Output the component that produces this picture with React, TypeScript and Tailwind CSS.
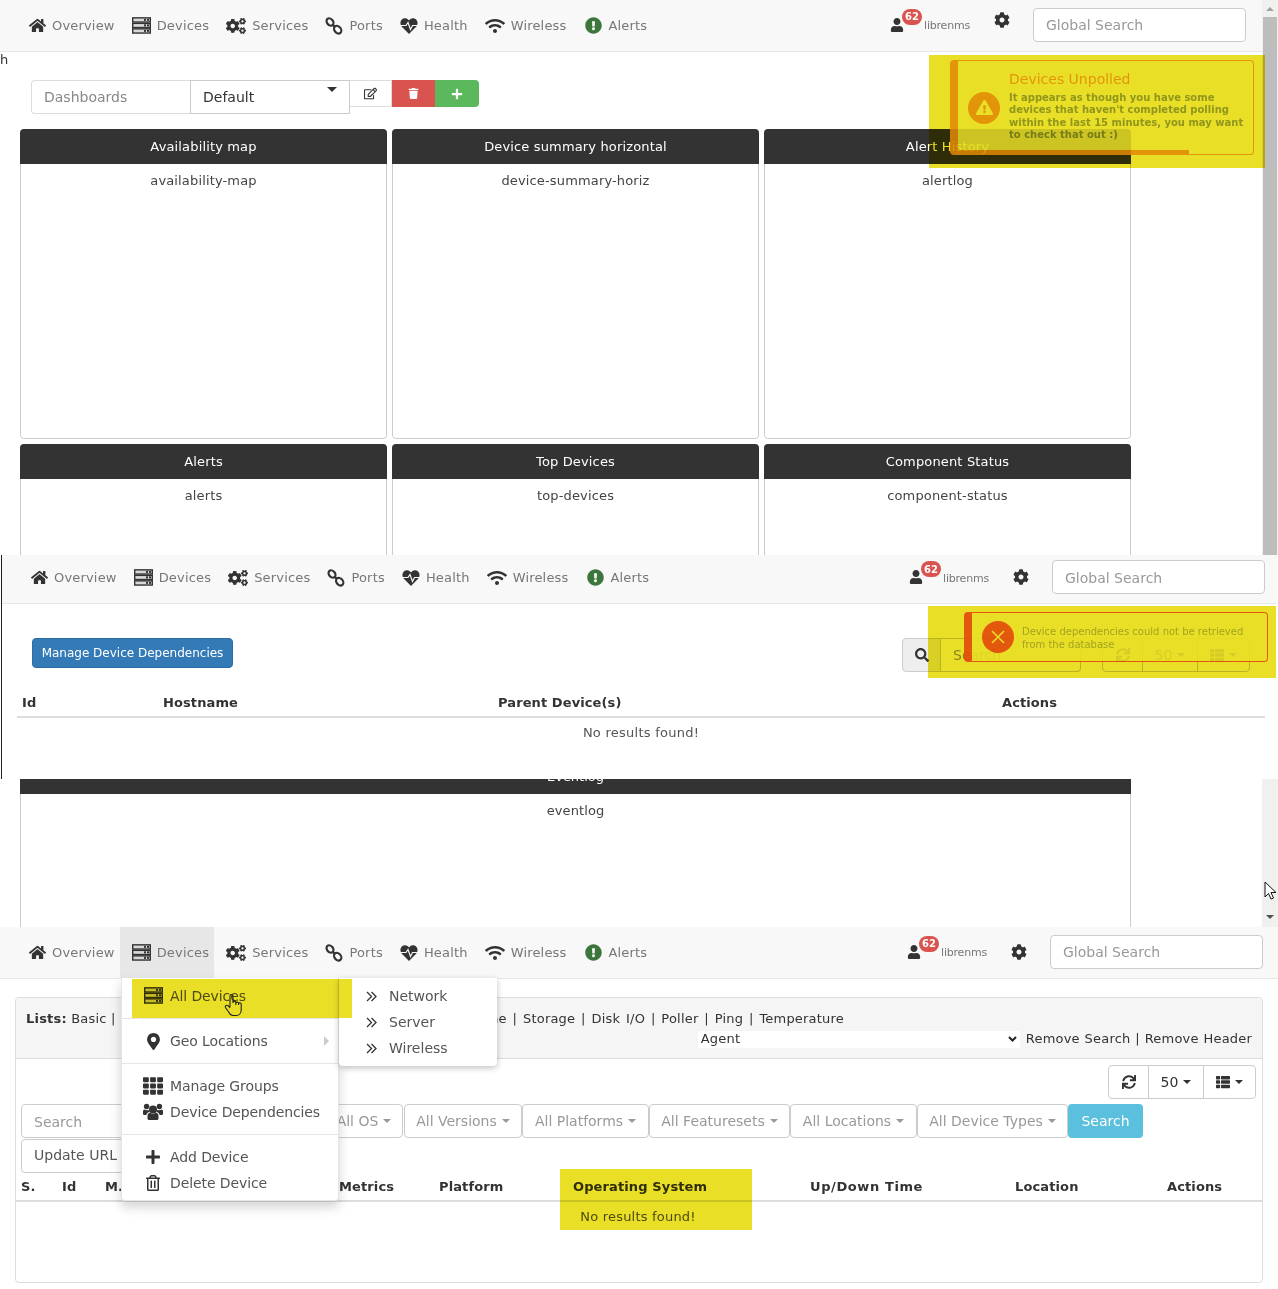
import React from "react";
import {
  FaHome, FaCogs, FaWifi, FaExclamationCircle, FaUser, FaCog,
  FaRegEdit, FaTrash, FaPlus, FaSearch, FaSync, FaThList, FaMapMarkerAlt,
  FaTh, FaRegTrashAlt, FaExclamationTriangle,
} from "react-icons/fa";

function ServerIcon({ size = 19 }: { size?: number }) {
  return (
    <svg width={size} height={size * 0.9} viewBox="0 0 19 17">
      {[0.8, 6.3, 11.8].map((y) => (
        <g key={y}>
          <rect x="0.7" y={y} width="17.6" height="4.2" fill="#d8d8d8" stroke="#333" strokeWidth="1.4" />
          <rect x="12" y={y + 1} width="2" height="2" fill="#333" />
          <rect x="15" y={y + 1} width="2" height="2" fill="#333" />
        </g>
      ))}
    </svg>
  );
}

function LinkIcon({ size = 18 }: { size?: number }) {
  return (
    <svg width={size} height={size} viewBox="0 0 18 18" fill="none" stroke="#333" strokeWidth="2.2">
      <ellipse cx="5" cy="5" rx="4" ry="3" transform="rotate(50 5 5)" />
      <ellipse cx="12.7" cy="12.7" rx="4.2" ry="3.2" transform="rotate(50 12.7 12.7)" />
      <path d="M7.5 7.5l2.6 2.6" />
    </svg>
  );
}

function HeartIcon({ size = 18 }: { size?: number }) {
  return (
    <svg width={size} height={size} viewBox="0 0 18 18">
      <path d="M9 17L1.6 9.5C-1 6 1 1.2 5 1.2c2 0 3.3 1.1 4 2.2.7-1.1 2-2.2 4-2.2 4 0 6 4.8 3.4 8.3z" fill="#333" />
      <path d="M0 8.5h6l2-3 2.5 7 2-4H18" fill="none" stroke="#f8f8f8" strokeWidth="1.2" />
    </svg>
  );
}

function UsersIcon({ size = 20 }: { size?: number }) {
  return (
    <svg width={size} height={size} viewBox="0 0 20 20" fill="#333">
      <circle cx="10" cy="7.5" r="4" />
      <circle cx="3.6" cy="4.5" r="2.7" />
      <circle cx="16.4" cy="4.5" r="2.7" />
      <path d="M4.5 14c0-2 1-3 2.6-3.2 1.6 1.4 4.2 1.4 5.8 0 1.6.2 2.6 1.2 2.6 3.2v2.5c0 1-1 1.5-2 1.5H6.500c-1 0-2-.5-2-1.500z" />
      <path d="M0 9.500C0 8.200.6 7.700 1.600 7.500c1.200 1 3 1 4 .2.100 1 .6 1.700 1.200 2.300C4.600 10.300 3.600 11.400 3.400 13H1.500C.6 13 0 12.500 0 11.500zM20 9.500c0-1.300-.6-1.800-1.600-2-1.200 1-3 1-4 .2-.1 1-.6 1.700-1.200 2.300 2.200.3 3.200 1.400 3.400 3h1.900c.9 0 1.500-.5 1.500-1.500z" />
    </svg>
  );
}

function DoubleAngle() {
  return (
    <svg width="11" height="11" viewBox="0 0 11 11" fill="none" stroke="#333" strokeWidth="1.3">
      <path d="M1 1l4.5 4.5L1 10M5.500 1L10 5.500 5.500 10" />
    </svg>
  );
}

const navItems = [
  { label: "Overview", Icon: FaHome, w: "w-[18px]", size: 17, color: "text-[#333]" },
  { label: "Devices", Icon: ServerIcon, w: "w-[19px]", size: 19, color: "text-[#333]" },
  { label: "Services", Icon: FaCogs, w: "w-[20px]", size: 20, color: "text-[#333]" },
  { label: "Ports", Icon: LinkIcon, w: "w-[18px]", size: 18, color: "text-[#333]" },
  { label: "Health", Icon: HeartIcon, w: "w-[18px]", size: 18, color: "text-[#333]" },
  { label: "Wireless", Icon: FaWifi, w: "w-[20px]", size: 20, color: "text-[#333]" },
  { label: "Alerts", Icon: FaExclamationCircle, w: "w-[19px]", size: 17, color: "text-[#3c763d]" },
];

function Nav({ h, inner, pr, pb, active, gearUp }: { h: string; inner: string; pr: string; pb: string; active?: string; gearUp?: boolean }) {
  return (
    <div className={`${h} ${pr} ${pb} shrink-0 flex items-center pl-[16px] bg-[#f8f8f8] border-b border-[#e7e7e7]`}>
      <div className={`flex items-center ${inner} self-start`}>
        {navItems.map(({ label, Icon, w, size, color }) => (
          <div key={label} className={`flex items-center h-full pl-[12px] pr-[5px] gap-[6px] text-[13px] tracking-[0.18px] text-[#777] ${active === label ? "bg-[#e7e7e7]" : ""}`}>
            <span className={`${w} flex justify-center ${color}`}><Icon size={size} /></span>
            <span>{label}</span>
          </div>
        ))}
      </div>
      <div className="ml-auto flex items-center">
        <div className="relative w-[14px] text-[#333]">
          <FaUser size={14} />
          <span className="absolute left-[12px] top-[-9px] w-[20px] h-[16px] rounded-full bg-[#d9534f] text-white text-[10px] font-bold flex items-center justify-center">62</span>
        </div>
        <span className="ml-[20px] text-[11px] tracking-[-0.2px] text-[#777] mt-[4px]">librenms</span>
        <span className={`ml-[24px] text-[#333] ${gearUp ? "mb-[9px]" : ""}`}><FaCog size={16} /></span>
        <div className="ml-[23px] w-[213px] h-[34px] bg-white border border-[#ccc] rounded flex items-center pl-[12px] pt-[2px] text-[14px] text-[#999]">Global Search</div>
      </div>
    </div>
  );
}

function Widget({ title, body }: { title: string; body: string }) {
  return (
    <div className="flex flex-col h-[310px] rounded overflow-hidden">
      <div className="h-[35px] shrink-0 bg-[#333] text-white text-[13px] tracking-[0.15px] font-medium flex items-center justify-center">{title}</div>
      <div className="flex-1 bg-white border border-t-0 border-[#ccc] rounded-b pt-[8px] text-center text-[13px] tracking-[0.15px] leading-[18px] text-[#444]">{body}</div>
    </div>
  );
}

function Scroll({ thumb, up, down }: { thumb?: boolean; up?: boolean; down?: boolean }) {
  return (
    <div className="w-[16px] shrink-0 bg-[#f0f0f0] flex flex-col items-center">
      {up && (
        <div className="h-[17px] flex items-center justify-center shrink-0">
          <div className="w-0 h-0 border-x-[4px] border-b-[4px] border-x-transparent border-b-[#a3a3a3]" />
        </div>
      )}
      {thumb && <div className="w-[14px] flex-1 bg-[#bdbdbd]" />}
      {down && (
        <div className="mt-auto h-[20px] shrink-0 flex items-center justify-center">
          <div className="w-0 h-0 border-x-[4px] border-t-[4px] border-x-transparent border-t-[#505050]" />
        </div>
      )}
    </div>
  );
}

function Caret() {
  return <span className="inline-block ml-[5px] align-middle w-0 h-0 border-x-[4px] border-t-[4px] border-x-transparent border-t-current" />;
}

function Filter({ label, w }: { label: string; w: string }) {
  return (
    <div className={`${w} shrink-0 h-[34px] border border-[#ccc] rounded bg-white text-[14px] text-[#999] flex items-center justify-center whitespace-nowrap`}>
      {label}
      <Caret />
    </div>
  );
}

function MenuRow({ Icon, size, label, arrow }: { Icon: any; size: number; label: string; arrow?: boolean }) {
  return (
    <div className="relative h-[26px] flex items-center pl-[21px] text-[14px] tracking-[-0.1px] text-[#555]">
      <span className="w-[20px] mr-[7px] flex justify-center text-[#333]"><Icon size={size} /></span>
      {label}
      {arrow && <span className="absolute right-[9px] top-[8px] w-0 h-0 border-y-[5px] border-l-[5px] border-y-transparent border-l-[#ccc]" />}
    </div>
  );
}

function SubRow({ label }: { label: string }) {
  return (
    <div className="h-[26px] flex items-center pl-[27px] text-[14px] text-[#555]">
      <span className="w-[23px]"><DoubleAngle /></span>
      {label}
    </div>
  );
}

function Divider() {
  return <div className="my-[9px] h-px bg-[#e5e5e5]" />;
}

function BtnGroup() {
  return (
    <div className="flex h-[34px] w-[148px] border border-[#ccc] rounded bg-white text-[#333] text-[14px]">
      <div className="w-[39px] flex items-center justify-center"><FaSync size={14} /></div>
      <div className="w-[56px] flex items-center justify-center border-x border-[#ccc]">50<Caret /></div>
      <div className="flex-1 flex items-center justify-center"><FaThList size={14} /><Caret /></div>
    </div>
  );
}

export default function App() {
  return (
    <div className="relative w-[1278px] h-[1289px] overflow-hidden bg-white font-['DejaVu_Sans',sans-serif]">
      {/* Screen 1: dashboard */}
      <section className="h-[555px] flex overflow-hidden">
        <div className="w-[1262px] shrink-0 flex flex-col">
          <Nav h="h-[52px]" inner="h-[51px]" pr="pr-[16px]" pb="pb-[2px]" gearUp />
          <div className="h-[28px] shrink-0 text-[13px] leading-[16px] text-[#333]">h</div>
          <div className="h-[49px] shrink-0 ml-[31px] flex items-start text-[14px]">
            <div className="w-[159px] h-[34px] border border-[#ddd] border-r-0 rounded-l flex items-center pl-[12px] text-[#888]">Dashboards</div>
            <div className="relative w-[160px] h-[34px] border border-[#ccc] flex items-center pl-[12px] text-[#333]">
              Default
              <span className="absolute right-[12px] top-[6px] w-0 h-0 border-x-[5px] border-t-[5px] border-x-transparent border-t-[#333]" />
            </div>
            <div className="w-[42px] h-[27px] bg-white border border-l-0 border-[#ddd] flex items-center justify-center text-[#333]"><FaRegEdit size={13} /></div>
            <div className="w-[43px] h-[27px] bg-[#d9534f] flex items-center justify-center text-white"><FaTrash size={11} /></div>
            <div className="w-[44px] h-[27px] bg-[#5cb85c] rounded-r flex items-center justify-center text-white"><FaPlus size={12} /></div>
          </div>
          <div className="ml-[20px] w-[1111px] grid grid-cols-3 gap-[5px]">
            <Widget title="Availability map" body="availability-map" />
            <Widget title="Device summary horizontal" body="device-summary-horiz" />
            <Widget title="Alert History" body="alertlog" />
            <Widget title="Alerts" body="alerts" />
            <Widget title="Top Devices" body="top-devices" />
            <Widget title="Component Status" body="component-status" />
          </div>
        </div>
        <Scroll up thumb />
      </section>

      {/* Screen 2: device dependencies */}
      <section className="h-[224px] w-[1276px] flex flex-col bg-white border-l border-[#222] ml-px overflow-hidden">
        <Nav h="h-[49px]" inner="h-[45px]" pr="pr-[12px]" pb="pb-[4px]" gearUp={false} />
        <div className="mt-[34px] h-[34px] shrink-0 flex items-start pl-[30px] pr-[27px]">
          <div className="w-[201px] h-[30px] bg-[#337ab7] border border-[#2e6da4] rounded text-white text-[12px] flex items-center justify-center">Manage Device Dependencies</div>
          <div className="ml-auto flex">
            <div className="w-[39px] h-[34px] bg-[#eee] border border-[#ccc] rounded-l flex items-center justify-center text-[#333]"><FaSearch size={14} /></div>
            <div className="w-[140px] h-[34px] border border-l-0 border-[#ccc] rounded-r flex items-center pl-[12px] text-[14px] text-[#999]">Search</div>
            <div className="ml-[21px]"><BtnGroup /></div>
          </div>
        </div>
        <div className="ml-[15px] w-[1248px]">
          <div className="mt-[21px] h-[25px] pb-[8px] grid grid-cols-[141px_335px_504px_1fr] pl-[5px] items-center border-b-2 border-[#ddd] text-[13px] tracking-[0.1px] font-bold text-[#333]">
            <span>Id</span><span>Hostname</span><span>Parent Device(s)</span><span>Actions</span>
          </div>
          <div className="h-[29px] flex items-center justify-center text-[13px] tracking-[0.25px] text-[#555]">No results found!</div>
        </div>
      </section>

      {/* Screen 3: eventlog remainder */}
      <section className="h-[148px] flex overflow-hidden">
        <div className="w-[1262px] shrink-0">
          <div className="ml-[20px] w-[1111px] h-full flex flex-col">
            <div className="h-[15px] shrink-0 bg-[#333] overflow-hidden text-center text-white text-[13px] font-medium leading-[15px]">
              <div className="-mt-[10px]">Eventlog</div>
            </div>
            <div className="flex-1 border-x border-[#ccc] pt-[8px] text-center text-[13px] tracking-[0.1px] leading-[18px] text-[#444]">eventlog</div>
          </div>
        </div>
        <Scroll down />
      </section>

      {/* Screen 4: devices */}
      <section className="relative h-[362px] bg-white">
        <Nav h="h-[52px]" inner="h-[51px]" pr="pr-[15px]" pb="pb-[2px]" active="Devices" />
        <div className="ml-[15px] mt-[18px] w-[1248px] h-[286px] border border-[#ddd] rounded flex flex-col">
          <div className="h-[61px] shrink-0 bg-[#f5f5f5] border-b border-[#ddd] rounded-t px-[10px] pt-[12px] text-[13px] tracking-[0.2px] text-[#333]">
            <div className="flex h-[18px] leading-[18px] whitespace-nowrap">
              <div className="w-[497px] flex justify-between">
                <span><b>Lists:</b> Basic | Detail</span>
                <span className="[word-spacing:1.5px]">Uptime |&nbsp;</span>
              </div>
              <span className="[word-spacing:1.5px]">Storage | Disk I/O | Poller | Ping | Temperature</span>
            </div>
            <div className="flex items-center justify-end h-[20px] mt-[1px] whitespace-nowrap">
              <div className="w-[322px] h-[17px] bg-white flex items-center justify-between pl-[3px] pr-[3px] text-[13px]">
                Agent
                <svg width="9" height="6" viewBox="0 0 9 6"><path d="M1 1l3.500 3.500L8 1" fill="none" stroke="#222" strokeWidth="2" /></svg>
              </div>
              <span className="ml-[6px] [word-spacing:0.5px]">Remove Search | Remove Header</span>
            </div>
          </div>
          <div className="flex-1 flex flex-col pt-[6px]">
            <div className="flex justify-end pr-[6px]"><BtnGroup /></div>
            <div className="mt-[5px] ml-[5px] flex">
              <div className="w-[304px] h-[34px] shrink-0 border border-[#ccc] rounded bg-white flex items-center pl-[12px] pt-[2px] text-[14px] text-[#999]">Search</div>
              <Filter label="All OS" w="w-[78px]" />
              <div className="w-px" />
              <Filter label="All Versions" w="w-[118px]" />
              <Filter label="All Platforms" w="w-[127px]" />
              <Filter label="All Featuresets" w="w-[141px]" />
              <Filter label="All Locations" w="w-[127px]" />
              <Filter label="All Device Types" w="w-[151px]" />
              <div className="w-[75px] h-[34px] shrink-0 bg-[#5bc0de] rounded text-white text-[14px] flex items-center justify-center">Search</div>
            </div>
            <div className="mt-px ml-[5px] w-[110px] h-[34px] border border-[#ccc] rounded bg-white flex items-center pl-[12px] pb-[2px] text-[14px] text-[#555]">Update URL</div>
            <div className="h-[29px] shrink-0 grid grid-cols-[41px_43px_234px_100px_134px_237px_205px_152px_1fr] pl-[5px] items-center border-b-2 border-[#ddd] text-[13px] tracking-[0.12px] font-bold text-[#333]">
              <span>S.</span><span>Id</span><span>M.</span><span>Metrics</span><span>Platform</span><span>Operating System</span><span className="tracking-[0.6px]">Up/Down Time</span><span>Location</span><span>Actions</span>
            </div>
            <div className="h-[29px] flex items-center justify-center text-[13px] tracking-[0.2px] text-[#555] pr-[2px]">No results found!</div>
          </div>
        </div>

        {/* open dropdown */}
        <div className="absolute left-[121px] top-[51px] w-[218px] h-[223px] bg-white rounded-b shadow-[0_6px_12px_rgba(0,0,0,0.175)] border border-[#e5e5e5] border-t-0 py-[5px]">
          <MenuRow Icon={ServerIcon} size={19} label="All Devices" />
          <Divider />
          <MenuRow Icon={FaMapMarkerAlt} size={17} label="Geo Locations" arrow />
          <Divider />
          <MenuRow Icon={FaTh} size={20} label="Manage Groups" />
          <MenuRow Icon={UsersIcon} size={20} label="Device Dependencies" />
          <Divider />
          <MenuRow Icon={FaPlus} size={16} label="Add Device" />
          <MenuRow Icon={FaRegTrashAlt} size={16} label="Delete Device" />
        </div>
        <div className="absolute left-[339px] top-[51px] w-[158px] h-[88px] bg-white rounded-b shadow-[0_2px_6px_rgba(0,0,0,0.25)] py-[5px]">
          <SubRow label="Network" />
          <SubRow label="Server" />
          <SubRow label="Wireless" />
        </div>
        <div className="absolute left-[132px] top-[52px] w-[220px] h-[39px] bg-[#e9df27] mix-blend-multiply" />
        <div className="absolute left-[560px] top-[242px] w-[192px] h-[61px] bg-[#e9df27] mix-blend-multiply" />
        <svg className="absolute left-[224px] top-[66px]" width="19" height="24" viewBox="0 0 19 24" fill="none" stroke="#222" strokeWidth="1.1">
          <path d="M6 14V3a1.500 1.500 0 0 1 3 0v7M9 9.500a1.400 1.400 0 0 1 2.800 0V12M11.800 10.500a1.400 1.400 0 0 1 2.800 0V12M14.600 11a1.300 1.300 0 0 1 2.600 0v6c0 3-2 5.500-5 5.500H9c-2 0-3-1-4-3L1.500 14.500c-1-2 1.500-3 3-1.500L6 15" />
        </svg>
      </section>

      {/* toast: devices unpolled */}
      <div className="absolute left-[950px] top-[60px] w-[304px] h-[95px] rounded border border-[#f99d1c] border-l-[8px] bg-white opacity-85 flex items-center pl-[10px] pr-[8px]">
        <div className="w-[32px] h-[32px] shrink-0 rounded-full bg-[#f99d1c] flex items-center justify-center text-white"><FaExclamationTriangle size={17} /></div>
        <div className="ml-[9px] -mt-[5px]">
          <div className="mb-[3px] text-[14px] leading-[20px] font-medium text-[#f99d1c]">Devices Unpolled</div>
          <div className="text-[10px] leading-[12.3px] font-bold text-[#8f9ea6]">It appears as though you have some devices that haven't completed polling within the last 15 minutes, you may want to check that out :)</div>
        </div>
        <div className="absolute left-0 bottom-0 w-[231px] h-[4px] bg-[#f99d1c]" />
      </div>

      {/* toast: error */}
      <div className="absolute left-[964px] top-[612px] w-[304px] h-[50px] rounded border border-[#f9553f] border-l-[8px] bg-white opacity-90 flex items-center pl-[10px]">
        <div className="w-[32px] h-[32px] shrink-0 rounded-full bg-[#f9553f] flex items-center justify-center text-white">
          <svg width="16" height="16" viewBox="0 0 16 16" stroke="#fff" strokeWidth="1.6"><path d="M2 2l12 12M14 2L2 14" /></svg>
        </div>
        <div className="ml-[8px] mt-[2px] text-[10px] leading-[13px] text-[#a9b6bc]">Device dependencies could not be retrieved from the database</div>
      </div>

      {/* highlight marks */}
      <div className="absolute left-[929px] top-[55px] w-[336px] h-[113px] bg-[#e9df27] mix-blend-multiply" />
      <div className="absolute left-[928px] top-[606px] w-[348px] h-[72px] bg-[#e9df27] mix-blend-multiply" />

      {/* mouse arrow */}
      <svg className="absolute left-[1264px] top-[881px]" width="13" height="20" viewBox="0 0 13 20">
        <path d="M1 1v15l3.500-3.500L7 18l2.500-1L7 11.500h5z" fill="#fff" stroke="#111" strokeWidth="1" />
      </svg>
    </div>
  );
}
